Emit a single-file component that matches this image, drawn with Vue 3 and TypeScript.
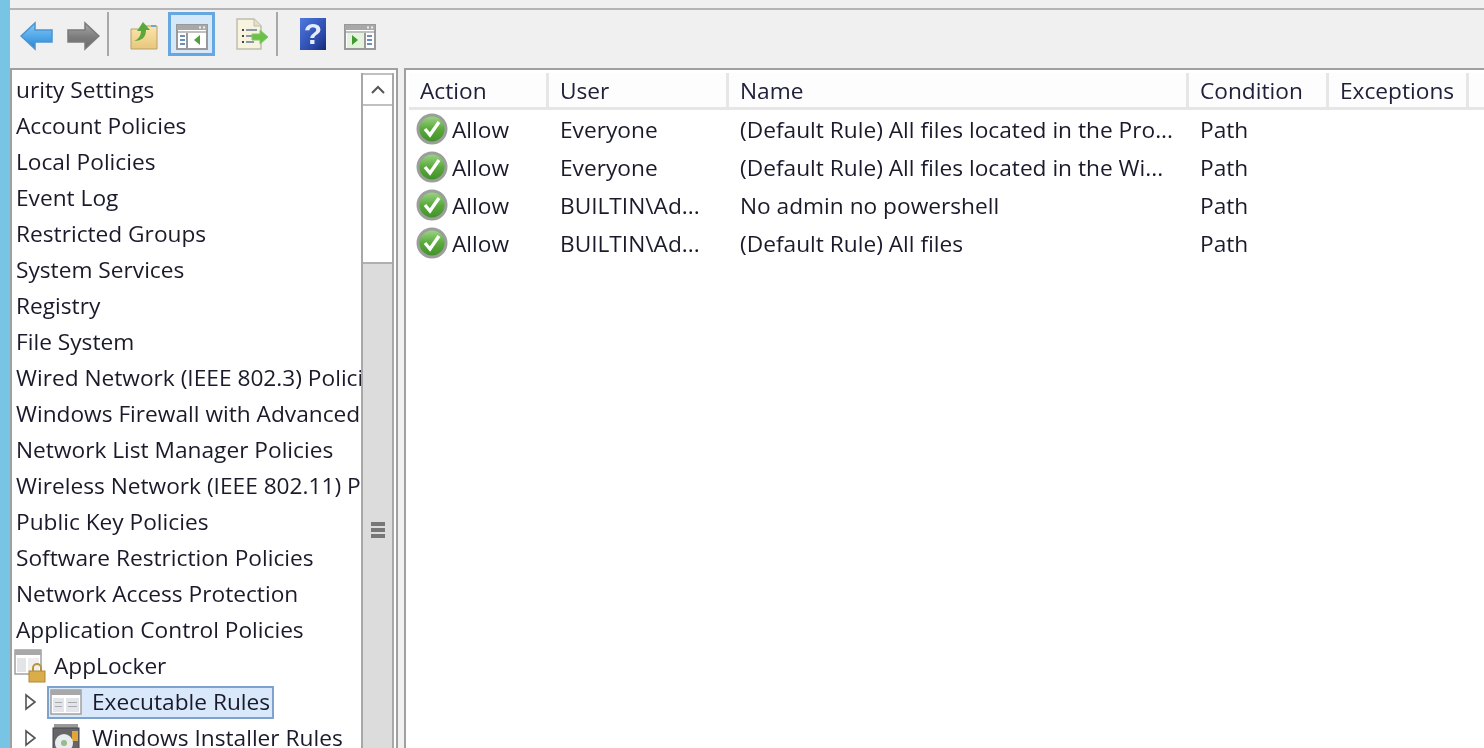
<script setup lang="ts">
const tree: string[] = [
  'urity Settings', 'Account Policies', 'Local Policies', 'Event Log', 'Restricted Groups',
  'System Services', 'Registry', 'File System', 'Wired Network (IEEE 802.3) Policies',
  'Windows Firewall with Advanced Security', 'Network List Manager Policies',
  'Wireless Network (IEEE 802.11) Policies', 'Public Key Policies',
  'Software Restriction Policies', 'Network Access Protection', 'Application Control Policies',
]
const cols = [
  { label: 'Action', width: 140 }, { label: 'User', width: 180 }, { label: 'Name', width: 460 },
  { label: 'Condition', width: 140 }, { label: 'Exceptions', width: 140 },
]
const rules = [
  { user: 'Everyone', name: '(Default Rule) All files located in the Pro...' },
  { user: 'Everyone', name: '(Default Rule) All files located in the Wi...' },
  { user: 'BUILTIN\\Ad...', name: 'No admin no powershell' },
  { user: 'BUILTIN\\Ad...', name: '(Default Rule) All files' },
]
</script>

<template>
  <div class="screen">
    <div class="strip"></div>
    <div class="window">
      <div class="topbar"></div>
      <div class="toolbar">
        <button class="tool t-back">
          <svg width="34" height="30" viewBox="0 0 34 30"><defs><linearGradient id="b" x1="0" y1="0" x2="0" y2="1"><stop offset="0" stop-color="#8cc8f4"/><stop offset=".55" stop-color="#4ea6e8"/><stop offset="1" stop-color="#2f80c8"/></linearGradient></defs><path d="M1 15 15 2v7h17v12H15v7z" fill="url(#b)" stroke="#4a94d4" stroke-width="1.5"/></svg>
        </button>
        <button class="tool t-fwd">
          <svg width="34" height="30" viewBox="0 0 34 30"><defs><linearGradient id="g" x1="0" y1="0" x2="0" y2="1"><stop offset="0" stop-color="#a8a8a8"/><stop offset=".55" stop-color="#7c7c7c"/><stop offset="1" stop-color="#6a6a6a"/></linearGradient></defs><path d="M33 15 19 2v7H2v12h17v7z" fill="url(#g)" stroke="#7a7a7a" stroke-width="1.5"/></svg>
        </button>
        <div class="sep s1"></div>
        <button class="tool t-up">
          <svg width="28" height="30" viewBox="0 0 28 30"><defs><linearGradient id="f" x1="0" y1="0" x2="0" y2="1"><stop offset="0" stop-color="#fbe6ac"/><stop offset="1" stop-color="#e8c67c"/></linearGradient></defs><path d="M1 9h9l2-3h15v23H1z" fill="url(#f)" stroke="#b9a068"/><path d="M4 21c5-2 7-6 7-10H7l6-9 7 8h-4c0 7-4 11-12 11z" fill="#5aa83c"/><path d="M21 5h5v2h-5z" fill="#6aa6d8"/></svg>
        </button>
        <button class="tool active">
          <svg width="32" height="26" viewBox="0 0 32 26"><rect x="1" y="1" width="30" height="24" fill="#fff" stroke="#999" stroke-width="2"/><path d="M1 1h30v5H1z" fill="#a8a8a8"/><path d="M23 2.500h2v2h-2zm4 0h2v2h-2z" fill="#eee"/><path d="M2 8h28" stroke="#aaa" stroke-width="1.500"/><path d="M11 9v15" stroke="#999" stroke-width="2"/><path d="M4 11h5v2H4zm0 4h5v2H4zm0 4h5v2H4z" fill="#6a90c0"/><path d="M24 11v10l-6-5z" fill="#4ea03c"/></svg>
        </button>
        <button class="tool t-export">
          <svg width="32" height="32" viewBox="0 0 32 32"><path d="M1 1h17l7 7v23H1z" fill="#f8f3df" stroke="#bdbdad" stroke-width="1.500"/><path d="M18 1v7h7" fill="#e6e0c8" stroke="#bdbdad"/><path d="M6 11h2v2H6zm0 6h2v2H6zm0 6h2v2H6z" fill="#444"/><path d="M10 11h11v2H10zm0 6h8v2h-8zm0 6h8v2h-8z" fill="#8a98a8"/><path d="M32 19l-8-7v4h-8v6h8v4z" fill="#6cc04a" stroke="#7fc868"/></svg>
        </button>
        <div class="sep s2"></div>
        <button class="tool t-help">
          <svg class="helpicon" width="26" height="32" viewBox="0 0 26 32"><defs><linearGradient id="h" x1="0" y1="0" x2="1" y2="1"><stop offset="0" stop-color="#4f78e0"/><stop offset=".7" stop-color="#2a48a8"/><stop offset="1" stop-color="#14296f"/></linearGradient></defs><rect width="26" height="32" fill="url(#h)"/></svg>
          <span class="q">?</span>
        </button>
        <button class="tool t-show">
          <svg width="32" height="26" viewBox="0 0 32 26"><rect x="1" y="1" width="30" height="24" fill="#fff" stroke="#999" stroke-width="2"/><path d="M1 1h30v5H1z" fill="#a8a8a8"/><path d="M23 2.500h2v2h-2zm4 0h2v2h-2z" fill="#eee"/><path d="M2 8h28" stroke="#aaa" stroke-width="1.500"/><path d="M21 9v15" stroke="#999" stroke-width="2"/><path d="M23 11h5v2h-5zm0 4h5v2h-5zm0 4h5v2h-5z" fill="#6a90c0"/><path d="M3 9h17v15H3z" fill="#e3f3dc"/><path d="M8 11v10l6-5z" fill="#3f9a30"/></svg>
        </button>
      </div>
      <div class="panes">
        <aside class="left">
          <div class="tree">
            <div v-for="t in tree" :key="t" class="node">{{ t }}</div>
            <div class="node n-app">
              <svg class="ic" width="32" height="34" viewBox="0 0 32 34"><rect x="1" y="1" width="26" height="24" fill="#fff" stroke="#a0a0a0" stroke-width="1.500"/><path d="M1 1h26v5H1z" fill="#a8a8a8"/><path d="M3 9h9v14H3z" fill="#e2e4e8"/><path d="M14 9h11v14H14z" fill="#eee"/><path d="M19 22v-3a4 4 0 0 1 8 0v3" fill="none" stroke="#b8923c" stroke-width="2"/><rect x="15" y="22" width="16" height="11" fill="#d8ad4a" stroke="#b08a35"/></svg>
              AppLocker
            </div>
            <div class="node n-sub">
              <svg class="arrow" width="14" height="18" viewBox="0 0 14 18"><path d="M2 2l9 7-9 7z" fill="#fff" stroke="#555" stroke-width="1.600"/></svg>
              <span class="selected">
                <svg width="32" height="26" viewBox="0 0 32 26"><rect x="1" y="1" width="30" height="24" fill="#fff" stroke="#a0a0a0" stroke-width="1.500"/><path d="M1 1h30v5H1z" fill="#a8a8a8"/><path d="M3 9h11v14H3zM16 9h13v14H16z" fill="#e2e6ec"/><path d="M5 13h7v1H5zm0 4h7v1H5zm13-4h9v1h-9zm0 4h9v1h-9z" fill="#aaa"/></svg>
                <span>Executable Rules</span>
              </span>
            </div>
            <div class="node n-sub">
              <svg class="arrow" width="14" height="18" viewBox="0 0 14 18"><path d="M2 2l9 7-9 7z" fill="#fff" stroke="#555" stroke-width="1.600"/></svg>
              <span class="plain">
                <svg width="32" height="30" viewBox="0 0 32 30"><path d="M4 1h24v4H4z" fill="#999"/><rect x="3" y="5" width="26" height="25" fill="#666" stroke="#445"/><path d="M22 8h6v10h-6z" fill="#e0a63a"/><circle cx="14" cy="20" r="9" fill="#e8eef0"/><circle cx="14" cy="20" r="3" fill="#9bb98a"/></svg>
                <span>Windows Installer Rules</span>
              </span>
            </div>
          </div>
          <div class="scroll">
            <div class="sbtn">
              <svg width="16" height="10" viewBox="0 0 16 10"><path d="M2 8l6-6 6 6" fill="none" stroke="#555" stroke-width="2"/></svg>
            </div>
            <div class="track"></div>
            <div class="thumb"><i></i><i></i><i></i></div>
          </div>
        </aside>
        <section class="right">
          <div class="head">
            <div v-for="c in cols" :key="c.label" class="hcell" :style="{ width: c.width + 'px' }">{{ c.label }}</div>
          </div>
          <div v-for="(r, i) in rules" :key="i" class="row">
            <div class="cell c-act">
              <svg width="32" height="32" viewBox="0 0 32 32"><defs><linearGradient id="ok" x1="0" y1="0" x2="0" y2="1"><stop offset="0" stop-color="#a2d88c"/><stop offset=".5" stop-color="#5aaa3a"/><stop offset="1" stop-color="#3e8f2a"/></linearGradient></defs><circle cx="16" cy="16" r="14" fill="url(#ok)" stroke="#9a9f9a" stroke-width="3"/><path d="M9 16l5 6 9-13" fill="none" stroke="#fff" stroke-width="3.400"/></svg>
              <span>Allow</span>
            </div>
            <div class="cell c-user">{{ r.user }}</div>
            <div class="cell c-name">{{ r.name }}</div>
            <div class="cell c-cond">Path</div>
          </div>
        </section>
      </div>
    </div>
  </div>
</template>

<style>
html, body { margin: 0; overflow: hidden; }
</style>

<style scoped>
.screen { width: 1484px; height: 748px; display: flex; overflow: hidden; background: #f0f0f0; font-family: "Open Sans", "Noto Sans", sans-serif; font-size: 22.7px; color: #1a1a2a; filter: blur(0.45px); }
.strip { width: 10px; flex: none; background: #78c4e4; }
.window { flex: 1; min-width: 0; display: flex; flex-direction: column; }
.topbar { height: 8px; border-bottom: 2px solid #b4b4b4; flex: none; }
.toolbar { height: 48px; flex: none; display: flex; align-items: center; padding-left: 8px; }
.tool { border: 0; padding: 0; background: none; display: flex; align-items: center; justify-content: center; position: relative; }
.t-back { width: 38px; margin-right: 8px; margin-top: 4px; }
.t-fwd { width: 38px; margin-top: 4px; }
.s1 { margin-left: 5px; }
.sep { width: 2px; height: 44px; background: #a8a8a8; flex: none; }
.t-up { width: 28px; margin-left: 21px; margin-right: 10px; margin-top: 2px; }
.active { width: 47px; height: 44px; box-sizing: border-box; background: #d5e8f9; border: 3px solid #66a7e0; margin-right: 21px; padding-top: 6px; }
.t-export { width: 32px; margin-right: 8px; }
.t-help { width: 26px; height: 32px; margin-left: 22px; margin-right: 18px; }
.helpicon { position: absolute; inset: 0; }
.q { position: relative; color: #e6ecff; font: bold 30px "Liberation Sans", sans-serif; line-height: 32px; }
.t-show { margin-top: 6px; }
.panes { flex: 1; min-height: 0; display: flex; margin-top: 10px; }
.left { width: 388px; flex: none; box-sizing: border-box; border: 2px solid #a0a0a0; border-width: 2px 2px 0 2px; background: #fff; display: flex; overflow: hidden; }
.tree { width: 345px; flex: none; overflow: hidden; padding-left: 4px; padding-top: 2px; }
.node { height: 36px; line-height: 36px; white-space: nowrap; overflow: hidden; width: 345px; }
.n-app { display: flex; align-items: center; gap: 8px; margin-left: -2px; width: 347px; }
.ic { flex: none; }
.n-sub { display: flex; align-items: center; margin-left: 8px; width: 337px; }
.arrow { flex: none; margin-right: 9px; }
.selected, .plain { display: flex; align-items: center; gap: 10px; height: 33px; box-sizing: border-box; flex: none; }
.plain { padding: 0 6px 0 3px; }
.selected { background: #d9e8fb; border: 2px solid #7da2ce; padding: 0 2px 0 1px; }
.scroll { width: 33px; flex: none; margin-top: 3px; margin-right: 2px; display: flex; flex-direction: column; border-left: 2px solid #a8a8a8; border-right: 2px solid #a8a8a8; box-sizing: border-box; height: 700px; }
.sbtn { height: 33px; flex: none; display: flex; align-items: center; justify-content: center; border-top: 2px solid #c0c0c0; border-bottom: 2px solid #c0c0c0; box-sizing: border-box; background: #fff; }
.track { height: 156px; flex: none; background: #fff; }
.thumb { flex: 1; background: #dcdcdc; border-top: 2px solid #b0b0b0; display: flex; flex-direction: column; align-items: center; gap: 2px; padding-top: 258px; }
.thumb i { display: block; width: 14px; height: 4px; background: #777; }
.right { flex: 1; min-width: 0; margin-left: 6px; border: 2px solid #a0a0a0; border-width: 2px 0 0 2px; background: #fff; box-sizing: border-box; padding: 3px 0 0 3px; }
.head { display: flex; height: 37px; border-bottom: 3px solid #e6e6e6; box-sizing: border-box; background: #fdfdfd; }
.hcell { box-sizing: border-box; flex: none; padding-left: 11px; border-right: 3px solid #e6e6e6; line-height: 35px; color: #20203a; }
.row { display: flex; height: 38px; align-items: center; }
.cell { flex: none; white-space: nowrap; box-sizing: border-box; }
.c-act { width: 140px; display: flex; align-items: center; gap: 4px; padding-left: 7px; }
.c-user { width: 180px; padding-left: 11px; }
.c-name { width: 460px; padding-left: 11px; }
.c-cond { width: 140px; padding-left: 11px; }
</style>
